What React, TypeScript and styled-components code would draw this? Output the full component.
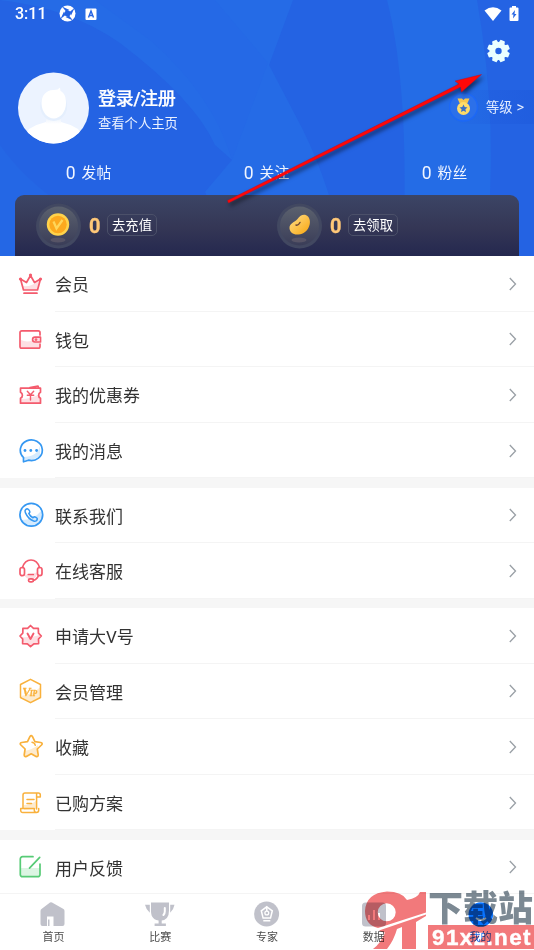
import React from "react";
import styled, { createGlobalStyle } from "styled-components";

const GlobalStyle = createGlobalStyle`
  * { box-sizing: border-box; }
  body {
    margin: 0;
    background: #fff;
    font-family: Roboto, "Noto Sans CJK SC", sans-serif;
    overflow: hidden;
  }
  svg { display: block; flex: none; }
`;

const Screen = styled.div`
  position: relative;
  width: 534px;
  height: 950px;
  display: flex;
  flex-direction: column;
  overflow: hidden;
  background: #fff;
`;

const Header = styled.header`
  position: relative;
  height: 256px;
  flex: none;
  display: flex;
  flex-direction: column;
  background: #2463e3;
  color: #fff;
  isolation: isolate;
`;

const HeaderArt = styled.svg`
  position: absolute;
  inset: 0;
  z-index: -1;
`;

const StatusBar = styled.div`
  height: 28px;
  padding: 0 15px 0 15px;
  display: flex;
  align-items: center;
  justify-content: space-between;
`;

const StatusGroup = styled.div<{ $gap: number }>`
  display: flex;
  align-items: center;
  gap: ${(p) => p.$gap}px;
  margin-top: -1px;
`;

const Clock = styled.span`
  width: 33px;
  font-size: 16px;
  font-weight: 500;
  margin-right: 2px;
`;

const Toolbar = styled.div`
  height: 44px;
  padding: 11px 24px 0 0;
  display: flex;
  justify-content: flex-end;
`;

const Profile = styled.div`
  height: 72px;
  padding-left: 18px;
  display: flex;
`;

const UserText = styled.div`
  padding: 15px 0 0 9px;
  flex: 1;
`;

const UserName = styled.div`
  font-size: 18px;
  line-height: 24px;
  font-weight: 500;
  letter-spacing: -0.3px;
  -webkit-text-stroke: 0.2px #fff;
`;

const UserHint = styled.div`
  font-size: 13.3px;
  line-height: 20px;
  margin-top: 3px;
  color: #eaf1ff;
`;

const Level = styled.div`
  width: 85px;
  height: 34px;
  margin-top: 18px;
  display: flex;
  align-items: center;
  border-radius: 17px 0 0 17px;
  background: linear-gradient(90deg, rgba(30, 95, 225, 0), rgba(30, 90, 220, 0.6));
  font-size: 13.3px;
  color: #e4edff;
  gap: 7px;
  white-space: nowrap;
`;

const LevelText = styled.span`
  margin-top: -1px;
`;

const LevelMore = styled.span`
  display: inline-block;
  font-size: 14.5px;
  margin-left: 4px;
  transform: translateY(-0.5px);
`;

const Stats = styled.div`
  height: 51px;
  padding-top: 16px;
  display: grid;
  grid-template-columns: repeat(3, 1fr);
`;

const Stat = styled.div`
  height: 26px;
  display: flex;
  align-items: center;
  justify-content: center;
  gap: 6px;
  padding-right: 1px;
  font-size: 14.8px;
  color: #f0f5ff;
`;

const StatNumber = styled.span`
  font-size: 17.5px;
`;

const StatLabel = styled.span`
  margin-top: -4px;
`;

const AssetCard = styled.div`
  height: 61px;
  margin: 0 15px;
  padding-left: 21px;
  display: grid;
  grid-template-columns: 241px 241px;
  align-items: center;
  border-radius: 9px 9px 0 0;
  background: linear-gradient(180deg, #3c4565 0%, #343655 55%, #24284f 100%);
`;

const Asset = styled.div`
  display: flex;
  align-items: center;
`;

const AssetCount = styled.span`
  width: 11px;
  margin: 0 0 0 7px;
  font-size: 20px;
  font-weight: 700;
  color: #ffc878;
  -webkit-text-stroke: 0.3px #ffc878;
`;

const AssetButton = styled.button`
  width: 50px;
  height: 22px;
  margin: 0 0 1px 7px;
  padding: 0;
  border: 1px solid #4b5069;
  border-radius: 5px;
  background: transparent;
  color: #fff;
  font: 13.3px/19px Roboto, "Noto Sans CJK SC", sans-serif;
`;

const Menu = styled.main`
  flex: 1;
  min-height: 0;
  overflow: hidden;
  display: flex;
  flex-direction: column;
  gap: 9.2px;
  background: #f6f6f6;
`;

const MenuGroup = styled.section`
  background: #fff;
  flex: none;
`;

const MenuRow = styled.div`
  height: 55.6px;
  padding-left: 18px;
  display: flex;
  align-items: center;
`;

const MenuBody = styled.div`
  height: 100%;
  flex: 1;
  margin-left: 11px;
  padding: 1px 17px 0 0;
  display: flex;
  align-items: center;
  justify-content: space-between;
  border-bottom: 1px solid #f4f4f4;
  font-size: 17px;
  color: #333;
`;

const TabBar = styled.nav`
  height: 57px;
  flex: none;
  display: grid;
  grid-template-columns: repeat(5, 1fr);
  border-top: 1px solid #f4f4f4;
  background: #fff;
`;

const Tab = styled.div<{ $active?: boolean }>`
  padding-top: 7px;
  display: flex;
  flex-direction: column;
  align-items: center;
  font-size: 11px;
  line-height: 16px;
  gap: 3px;
  color: ${(p) => (p.$active ? "#1a6af0" : "#4d4d4d")};
`;

const Arrow = styled.svg`
  position: absolute;
  left: 0;
  top: 0;
  filter: drop-shadow(2px 3px 2px rgba(0, 0, 0, 0.55));
`;

const Watermark = styled.div`
  position: absolute;
  right: 0;
  top: 889px;
  width: 170px;
  height: 61px;
  display: flex;
  mix-blend-mode: multiply;
`;

const WatermarkText = styled.div`
  width: 106px;
  margin-left: 2px;
`;

const WatermarkName = styled.div`
  height: 36px;
  font: 900 35px/34px "Noto Sans CJK SC", sans-serif;
  color: #7c8993;
  white-space: nowrap;
`;

const WatermarkSite = styled.div`
  height: 24px;
  padding-left: 4px;
  background: #f2797b;
  color: #fff;
  font: bold 22.5px/25px "Liberation Sans", sans-serif;
  letter-spacing: 1.4px;
  white-space: nowrap;
  -webkit-text-stroke: 0.4px #fff;
`;

const RED = "#f45b6d";
const PINK = "#fddfe3";
const BLUE = "#3598f2";
const SKY = "#d5eafd";
const GOLD = "#f9b13c";
const CREAM = "#fdebcf";
const GREEN = "#57cb76";

const Line = ({ color, children }: { color: string; children: React.ReactNode }) => (
  <svg width="26" height="26" viewBox="0 0 26 26" fill="none" stroke={color} strokeWidth="1.7" strokeLinecap="round" strokeLinejoin="round">
    {children}
  </svg>
);

const icons: Record<string, React.ReactNode> = {
  crown: (
    <Line color={RED}>
      <path d="M5 15q8 1 14-4l2-1-2 9H6z" fill={PINK} stroke="none" />
      <path d="M2.500 8l3 11h14l3-11-6 3.500-4-7-4 7zM6 22.200h13" />
      <g fill={RED} stroke="none"><circle cx="12.500" cy="4" r="1.600" /><circle cx="2.500" cy="8" r="1.600" /><circle cx="22.500" cy="8" r="1.600" /></g>
    </Line>
  ),
  wallet: (
    <Line color={RED}>
      <path d="M3 14q8 4 18-3v10H3z" fill={PINK} stroke="none" />
      <path d="M22 9V6.500a1.700 1.700 0 0 0-1.700-1.700H3.700A1.700 1.700 0 0 0 2 6.500v14a1.700 1.700 0 0 0 1.700 1.700h16.600a1.700 1.700 0 0 0 1.700-1.700V18M22.500 11.200H17a2.400 2.400 0 0 0 0 4.800h5.500z" />
      <circle cx="18" cy="13.600" r=".6" />
    </Line>
  ),
  coupon: (
    <Line color={RED}>
      <path d="M3 17q10 0 19-5v9H3z" fill={PINK} stroke="none" />
      <path d="M2.500 6.200h20v4a3.300 3.300 0 0 0 0 6v5h-20v-5a3.300 3.300 0 0 0 0-6zM12 5.700L20 4l.7 2" />
      <path d="M9.300 9.300l3.200 3.500 3.200-3.500M9.300 13.200h6.400M12.500 12.800V18" strokeWidth="1.400" />
    </Line>
  ),
  message: (
    <Line color={BLUE}>
      <path d="M5 19q14 0 17-11v10l-8 4H7z" fill={SKY} stroke="none" />
      <path d="M5.500 23.800v-4.300A11 10.300 0 1 1 10.500 22.200z" />
      <g fill={BLUE} stroke="none"><circle cx="7" cy="12.500" r="1.400" /><circle cx="12.800" cy="12.500" r="1.400" /><circle cx="18.600" cy="12.500" r="1.400" /></g>
    </Line>
  ),
  phone: (
    <Line color={BLUE}>
      <path d="M3 18q13 0 20-9a10.500 10.500 0 0 1-20 9z" fill={SKY} stroke="none" />
      <circle cx="13.300" cy="12.800" r="11.400" />
      <path d="M9.100 6.800c-2 .5-2.500 2-1.600 4.100 1.700 4 4.500 6.900 8.200 8.100 2 .5 3.500-.4 3.600-2.100.1-.9-2.500-2.400-3.300-2l-1 .9c-1.700-.7-3.400-2.400-4.200-4.400l1-1.200c.3-.8-1.400-3.500-2.700-3.400z" strokeWidth="1.500" />
    </Line>
  ),
  headset: (
    <Line color={RED}>
      <path d="M6 17q7 0 14-3-1 5-6 8-6-1-8-5z" fill={PINK} stroke="none" />
      <path d="M4.500 9.500C6 4.500 9 2 13 2s7 2.500 8.500 7.500M20.500 17.500c-1 2.800-2.600 4.300-5 4.800M10.300 16.500h5" />
      <rect x="2" y="9.500" width="4.500" height="8.200" rx="2.200" />
      <rect x="19.500" y="9.500" width="4.500" height="8.200" rx="2.200" />
      <rect x="10.500" y="20.800" width="5" height="3" rx="1.500" />
    </Line>
  ),
  vbadge: (
    <Line color={RED}>
      <path d="M3 14q9 1 19-2l-3 8-6 4-8-5z" fill={PINK} stroke="none" />
      <path d="M12.500 2.500l3 2.800 4.800.1.200 4.700L23.300 13l-2.800 3 .1 4.600-4.800.2-3.300 2.900-3.100-2.900-4.800-.2.100-4.600L2 13l2.800-2.900.1-4.700 4.700-.1z" />
      <path d="M9.500 10.500l3 5.500 3-5.500" strokeWidth="1.900" />
    </Line>
  ),
  vip: (
    <Line color={GOLD}>
      <path d="M2.500 18Q14 17 22.500 9v10l-10 5.500z" fill={CREAM} stroke="none" />
      <path d="M12.500 1.300l10 5.200v13l-10 5.200-10-5.200v-13z" strokeWidth="1.500" />
      <text x="4.300" y="17.500" fill={GOLD} stroke={GOLD} strokeWidth=".3" fontFamily="Liberation Serif" fontStyle="italic" fontWeight="700" fontSize="12.500">V<tspan fontSize="7.500" dx="-1">IP</tspan></text>
    </Line>
  ),
  star: (
    <Line color={GOLD}>
      <path d="M6 17q8-1 14-6l-1 12-6-2.500L6 23z" fill={CREAM} stroke="none" />
      <path d="M11.900 2.700q1.300-2 2.600 0l2.400 5 5.800.8q2.500.6.8 2.500l-4.200 4 .9 5.800q0 2.400-2.200 1.600L13.200 19.800l-4.800 2.600q-2.200.8-2.200-1.600l.9-5.800-4.200-4q-1.700-1.900.8-2.500l5.800-.8z" />
      <path d="M14 8.300q2.800.5 3.300 3" strokeWidth="1.400" />
    </Line>
  ),
  scroll: (
    <Line color={GOLD}>
      <path d="M6 15q8 0 13-5v9l-13 1z" fill={CREAM} stroke="none" />
      <path d="M5 18.500V5a2 2 0 0 1 2-2h13.300a2 2 0 0 1 2 2v2h-3.800M18.600 3.400V19M5 18.500H2.700v2a2 2 0 0 0 2 2h14.100M3 18.500h13.300v1.800a2.200 2.200 0 0 0 4.400 0v-1.800M9 9.500h7M9 13.400h4.500" strokeWidth="1.500" />
    </Line>
  ),
  edit: (
    <Line color={GREEN}>
      <path d="M3 14h19v8H3z" fill="#dcf5e3" stroke="none" />
      <path d="M15 2.700H4.500a2.200 2.200 0 0 0-2.200 2.200v15.600a2.200 2.200 0 0 0 2.200 2.200h15.300a2.200 2.200 0 0 0 2.200-2.200V10M21.700 3.300L11.500 14.200" />
    </Line>
  ),
};

const groups: [string, string][][] = [
  [["crown", "会员"], ["wallet", "钱包"], ["coupon", "我的优惠券"], ["message", "我的消息"]],
  [["phone", "联系我们"], ["headset", "在线客服"]],
  [["vbadge", "申请大V号"], ["vip", "会员管理"], ["star", "收藏"], ["scroll", "已购方案"]],
  [["edit", "用户反馈"]],
];

const Chevron = () => (
  <svg width="8" height="14" viewBox="0 0 8 14" fill="none" stroke="#9aa0a6" strokeWidth="1.300">
    <path d="M.8 1L6.500 7 .8 13" />
  </svg>
);

const TAB_GRAY = "#c0c1ca";

const tabs: { label: string; active?: boolean; icon: React.ReactNode }[] = [
  {
    label: "首页",
    icon: <path fill={TAB_GRAY} d="M10 1.600q1-.7 2 0L23.500 8q1 .7 1 2v13q0 2-2 2H13.500V15.500H7V25H2.500q-2 0-2-2V10q0-1.300 1-2zM8 18.500h1.500V25H8z" />,
  },
  {
    label: "比赛",
    icon: (
      <>
        <path fill={TAB_GRAY} d="M4 1.500h18v8q0 9-7.300 10v3h4.200V25H7.600v-2.500h4v-3C5 18.500 4 14 4 9.500zM-2 3.800h4.800v8Q-1 8.500-2 3.800zM27.500 3.800h-4.300v8q3.500-3.300 4.300-8z" />
        <path d="M17.800 7v3.500q0 2-1.400 3.500" stroke="#fff" strokeWidth="2" strokeLinecap="round" fill="none" />
      </>
    ),
  },
  {
    label: "专家",
    icon: (
      <>
        <circle cx="12.600" cy="13" r="12.500" fill={TAB_GRAY} />
        <path d="M12.800 5.800l5.500 4-1.800 7.300H9.100L7.300 9.800z" stroke="#fff" strokeWidth="1.500" fill="none" />
        <path d="M12.800 5.500V10M9.300 19.800h7" stroke="#fff" strokeWidth="1.500" />
        <circle cx="12.800" cy="12" r="1.900" fill="none" stroke="#fff" strokeWidth="1.300" />
      </>
    ),
  },
  {
    label: "数据",
    icon: (
      <>
        <rect x="1" y="1.500" width="24" height="24" rx="3.500" fill={TAB_GRAY} />
        <path d="M8 19v-5M13 19V9M18 19v-7" stroke="#fff" strokeWidth="2" />
      </>
    ),
  },
  {
    label: "我的",
    active: true,
    icon: (
      <>
        <circle cx="12.800" cy="13.500" r="12.300" fill="#0873ff" />
        <path d="M8 17q5 4 10 0" stroke="#fff" strokeWidth="1.700" fill="none" />
      </>
    ),
  },
];

const AssetDisc = ({ bean }: { bean?: boolean }) => (
  <svg width="46" height="46" viewBox="0 0 46 46">
    <defs>
      <linearGradient id="disc" x2="0" y2="1"><stop stopColor="#5b616e" /><stop offset="1" stopColor="#3a3d58" /></linearGradient>
      <linearGradient id="gold" x2="1" y2="1"><stop stopColor="#ffe08b" /><stop offset="1" stopColor="#f8a40c" /></linearGradient>
    </defs>
    <circle cx="22.500" cy="23" r="22.500" fill="#424861" />
    <circle cx="22.500" cy="23" r="19.500" fill="url(#disc)" />
    <ellipse cx="22" cy="37" rx="7.500" ry="2.500" fill="#575466" />
    {bean ? (
      <path d="M12.500 25c0-5 5-5.500 8-9 3-4.500 7.500-5.500 10.500-2.500 4.500 5 1 17-9.500 18-5 .7-9-2.500-9-6.500z" fill="url(#gold)" />
    ) : (
      <>
        <circle cx="22" cy="21.500" r="11.200" fill="#ffd34b" />
        <circle cx="22" cy="21.500" r="8.700" fill="#fca91e" />
        <path d="M17.500 18.500l3 7 6-8.500" stroke="#ffd65a" strokeWidth="2.300" fill="none" />
      </>
    )}
    {bean && <path d="M19 22q2.200.8 4-2.500" stroke="#714b35" strokeWidth="1.500" fill="none" strokeLinecap="round" />}
  </svg>
);

export default function App() {
  return (
    <Screen>
      <GlobalStyle />
      <Header>
        <HeaderArt width="534" height="256" viewBox="0 0 534 256">
          <path d="M0 0Q70 8 120 43Q195 100 215 145L232 160L205 192L236 256H345Q330 185 303 130L269 65L293 0Z" fill="#256be6" />
          <path d="M215 0L268 63L232 160Q213 95 150 40L95 0Z" fill="#2569e6" />
          <path d="M387 0Q410 90 403 256H485Q500 130 477 0Z" fill="#246ce6" />
          <path d="M0 145Q45 210 160 256H0Z" fill="#2467e5" />
        </HeaderArt>
        <StatusBar>
          <StatusGroup $gap={9}>
            <Clock>3:11</Clock>
            <svg width="17" height="17" viewBox="0 0 17 17">
              <circle cx="8.500" cy="8.500" r="8" fill="#fff" />
              <circle cx="8.500" cy="8.500" r="3" fill="#2463e3" />
              <path d="M3 1.500L10.500 5 7 6.500zM15.500 3L12 10.500 10.500 7zM14 15.500L6.500 12l3.500-1.500zM1.500 14L5 6.500 6.500 10z" fill="#2463e3" />
            </svg>
            <svg width="12" height="12" viewBox="0 0 12 12">
              <rect x=".5" y=".5" width="11" height="11.500" rx="1" fill="#fff" />
              <path d="M3.500 9.500L6 3l2.500 6.500M4.500 7.500h3" stroke="#2463e3" strokeWidth="1.400" fill="none" />
            </svg>
          </StatusGroup>
          <StatusGroup $gap={7}>
            <svg width="18" height="14" viewBox="0 0 18 14"><path d="M.5 3.500Q9-3 17.500 3.500L9 14z" fill="#fff" /></svg>
            <svg width="10" height="15" viewBox="0 0 10 15">
              <path d="M3 0h4v1.500h1.500q1 0 1 1V14q0 1-1 1h-7q-1 0-1-1V2.500q0-1 1-1H3z" fill="#fff" />
              <path d="M6 4L2.500 8.500h2L4 12.500 7.500 8h-2z" fill="#2463e3" />
            </svg>
          </StatusGroup>
        </StatusBar>
        <Toolbar>
          <svg width="24" height="24" viewBox="0 0 24 24">
            <g fill="#eaffff">
              <path fillRule="evenodd" d="M12.500 3a9 9 0 1 1 0 18 9 9 0 0 1 0-18zm0 5.800a3.200 3.200 0 1 0 0 6.400 3.200 3.200 0 0 0 0-6.400z" />
              {[22.5, 67.5, 112.5, 157.5, 202.5, 247.5, 292.5, 337.5].map((a) => (
                <path key={a} d="M9.300 5L10 1.500q0-.8.800-.8h3.400q.8 0 .8.800l.7 3.500z" transform={`rotate(${a} 12.5 12)`} />
              ))}
            </g>
          </svg>
        </Toolbar>
        <Profile>
          <svg width="71" height="72" viewBox="0 0 71 72">
            <defs>
              <clipPath id="avatar"><circle cx="35.500" cy="36" r="35.500" /></clipPath>
              <linearGradient id="neck" x2="0" y2="1"><stop stopColor="#dfeafb" /><stop offset="1" stopColor="#fff" /></linearGradient>
            </defs>
            <g clipPath="url(#avatar)">
              <rect width="71" height="72" fill="#ecf3ff" />
              <path d="M11 57q8-5 17-7h15q9 2 17 7l11 16H0z" fill="#fff" />
              <path d="M28 42h15v10H28z" fill="url(#neck)" />
              <ellipse cx="35.700" cy="34" rx="13.500" ry="15" fill="#e5effd" />
              <path d="M23.500 31c0-8 5-12.500 11.500-13q5 .3 7-2.500l.5 3.500c4 2 5.500 6 5.500 12 0 9-6 15.500-12.200 15.500S23.500 40 23.500 31z" fill="#fff" />
            </g>
          </svg>
          <UserText>
            <UserName>登录/注册</UserName>
            <UserHint>查看个人主页</UserHint>
          </UserText>
          <Level>
            <svg width="30" height="30" viewBox="0 0 30 30">
              <circle cx="14.500" cy="15" r="14" fill="#2c70e9" stroke="#1d68f5" strokeWidth="1.500" />
              <path d="M8.500 6.500H13l1.500 1.500L16 6.500h4.500l-2 4.500h-8z" fill="#f5c64e" />
              <circle cx="14.500" cy="16.500" r="6.500" fill="#ffdc69" />
              <path d="M14.500 12.500l1.200 2.600 2.800.3-2.100 1.900.6 2.800-2.500-1.400-2.500 1.400.6-2.800-2.100-1.900 2.800-.3z" fill="#3970c7" />
            </svg>
            <LevelText>等级<LevelMore>&gt;</LevelMore></LevelText>
          </Level>
        </Profile>
        <Stats>
          {["发帖", "关注", "粉丝"].map((label) => (
            <Stat key={label}><StatNumber>0</StatNumber><StatLabel>{label}</StatLabel></Stat>
          ))}
        </Stats>
        <AssetCard>
          <Asset><AssetDisc /><AssetCount>0</AssetCount><AssetButton>去充值</AssetButton></Asset>
          <Asset><AssetDisc bean /><AssetCount>0</AssetCount><AssetButton>去领取</AssetButton></Asset>
        </AssetCard>
      </Header>
      <Menu>
        {groups.map((rows, i) => (
          <MenuGroup key={i}>
            {rows.map(([icon, label]) => (
              <MenuRow key={label}>
                {icons[icon]}
                <MenuBody><span>{label}</span><Chevron /></MenuBody>
              </MenuRow>
            ))}
          </MenuGroup>
        ))}
      </Menu>
      <TabBar>
        {tabs.map((tab) => (
          <Tab key={tab.label} $active={tab.active}>
            <svg width="26" height="26" viewBox="0 0 26 26" overflow="visible">{tab.icon}</svg>
            {tab.label}
          </Tab>
        ))}
      </TabBar>
      <Watermark>
        <svg width="62" height="61" viewBox="0 0 62 61">
          <path fill="#f2797b" fillRule="evenodd" d="M23 2.500Q38 2.500 43 11Q54 9 56 3H62V23.500L14 39Q1 36 1 22Q2 4 23 2.500zM22.700 14.300a9 9 0 1 0 0 18 9 9 0 0 0 0-18z" />
          <path fill="#f2797b" d="M15 41.500L62 25.500V27L52 33V60H38V38L33 40Q30 51 23 60H9Q17 54 21 43.500Q18 43.500 15 41.500z" />
        </svg>
        <WatermarkText>
          <WatermarkName>下载站</WatermarkName>
          <WatermarkSite>91xz.net</WatermarkSite>
        </WatermarkText>
      </Watermark>
      <Arrow width="534" height="256" viewBox="0 0 534 256">
        <path d="M227.500 200.500L459 84l-4-3 26.500-6.500L461.500 92l-1-5L228.500 203z" fill="#ff0808" stroke="#c0081a" strokeWidth=".4" />
      </Arrow>
    </Screen>
  );
}
